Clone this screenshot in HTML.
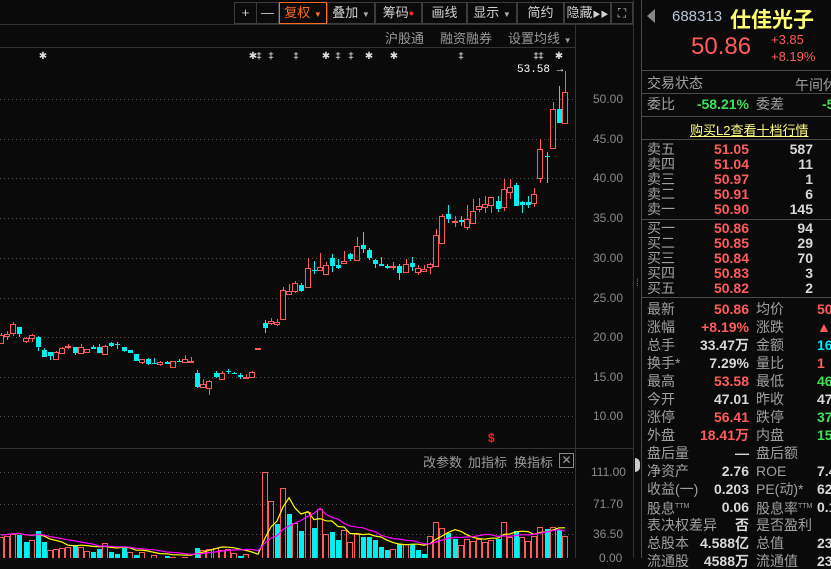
<!DOCTYPE html>
<html><head><meta charset="utf-8">
<style>
*{margin:0;padding:0;box-sizing:border-box}
body{width:831px;height:558px;background:#0a0a0a;overflow:hidden;position:relative;font-family:"Liberation Sans","Noto Sans CJK SC",sans-serif;color:#ccc}
.a{position:absolute;white-space:nowrap}
.btn{position:absolute;top:2px;height:22px;border:1px solid #3c3c3c;color:#d0d0d0;font-size:13px;line-height:20px;text-align:center}
.g{color:#9a9a9a}
.lbl{position:absolute;left:647px;font-size:14px;color:#a0a0a0;line-height:16px}
.l2{position:absolute;left:756px;font-size:14px;color:#a0a0a0;line-height:16px}
.v{position:absolute;font-size:14px;font-weight:bold;line-height:16px;text-align:right}
.r{color:#ff5b5b}.w{color:#d8d8d8}.gr{color:#3ee05a}.cy{color:#00e8f8}
.ax{position:absolute;left:593px;font-size:12px;color:#8a8a8a;line-height:12px}
.hl{position:absolute;left:642px;width:189px;height:1px;background:#4a4a4a}
</style></head><body>
<svg id="c" class="a" style="left:0;top:0" width="831" height="558"></svg>

<!-- toolbar -->
<div class="btn" style="left:234px;width:23px">+</div>
<div class="btn" style="left:256px;width:23px">—</div>
<div class="btn" style="left:279px;width:48px;border-color:#ff6a1a;color:#ff6a1a">复权 <span style="font-size:8px">▼</span></div>
<div class="btn" style="left:327px;width:48px">叠加 <span style="font-size:8px;color:#aaa">▼</span></div>
<div class="btn" style="left:375px;width:47px">筹码<span style="color:#ff2a2a;font-size:9px;vertical-align:top">●</span></div>
<div class="btn" style="left:422px;width:45px">画线</div>
<div class="btn" style="left:467px;width:50px">显示 <span style="font-size:8px;color:#aaa">▼</span></div>
<div class="btn" style="left:517px;width:47px">简约</div>
<div class="btn" style="left:564px;width:47px">隐藏<span style="font-size:8px">▶▶</span></div>
<div class="btn" style="left:611px;width:22px;font-size:12px">⛶</div>

<div class="a g" style="left:385px;top:28px;font-size:13px">沪股通</div>
<div class="a g" style="left:440px;top:28px;font-size:13px">融资融券</div>
<div class="a g" style="left:508px;top:28px;font-size:13px">设置均线 <span style="font-size:8px">▼</span></div>

<div class="a" style="left:517px;top:64px;font-size:11px;color:#fff;font-family:'Liberation Mono',monospace">53.58 →</div>
<div class="a" style="left:488px;top:431px;font-size:12px;color:#ff2020;font-weight:bold">$</div>

<div class="ax" style="top:93px">50.00</div>
<div class="ax" style="top:133px">45.00</div>
<div class="ax" style="top:172px">40.00</div>
<div class="ax" style="top:212px">35.00</div>
<div class="ax" style="top:252px">30.00</div>
<div class="ax" style="top:292px">25.00</div>
<div class="ax" style="top:331px">20.00</div>
<div class="ax" style="top:371px">15.00</div>
<div class="ax" style="top:410px">10.00</div>
<div class="ax" style="top:466px;left:591px">111.00</div>
<div class="ax" style="top:498px">71.70</div>
<div class="ax" style="top:528px">36.50</div>
<div class="ax" style="top:552px;left:599px">0.00</div>

<div class="a g" style="left:423px;top:452px;font-size:13px">改参数</div>
<div class="a g" style="left:468px;top:452px;font-size:13px">加指标</div>
<div class="a g" style="left:514px;top:452px;font-size:13px">换指标</div>
<div class="a g" style="left:559px;top:453px;width:15px;height:15px;border:1px solid #888;font-size:12px;line-height:13px;text-align:center">✕</div>

<!-- right panel -->
<div class="a" style="left:647px;top:9px;width:0;height:0;border-top:7px solid transparent;border-bottom:7px solid transparent;border-right:8px solid #888"></div>
<div class="a" style="left:672px;top:8px;font-size:15px;color:#b8c4d8">688313</div>
<div class="a" style="left:730px;top:4px;font-size:21px;color:#ffff70;font-weight:bold">仕佳光子</div>
<div class="a r" style="left:691px;top:33px;font-size:24px">50.86</div>
<div class="a r" style="left:771px;top:32px;font-size:13px">+3.85</div>
<div class="a r" style="left:771px;top:49px;font-size:13px">+8.19%</div>
<div class="hl" style="top:70px"></div>
<div class="lbl" style="top:75px">交易状态</div>
<div class="a" style="left:795px;top:75px;font-size:14px;color:#a0a0a0">午间休</div>
<div class="hl" style="top:93px"></div>
<div class="lbl" style="top:96px">委比</div>
<div class="v gr" style="left:690px;top:96px;width:59px">-58.21%</div>
<div class="l2" style="top:96px">委差</div>
<div class="v gr" style="left:822px;top:96px">-5</div>
<div class="hl" style="top:116px"></div>
<div class="a" style="left:690px;top:120px;font-size:13px;color:#ffff80;text-decoration:underline">购买L2查看十档行情</div>
<div class="hl" style="top:139px"></div>
<div id="rows"></div>
<div class="hl" style="top:219px"></div>
<div class="hl" style="top:297px"></div>
<div class="a" style="left:636px;top:278px;font-size:10px;color:#777">⁞</div>
<div class="a" style="left:635px;top:458px;width:5px;height:14px;background:#ccc;border-radius:0 6px 6px 0"></div>

<script>
var s='';
function L(x1,y1,x2,y2,c,d){s+='<line x1="'+x1+'" y1="'+y1+'" x2="'+x2+'" y2="'+y2+'" stroke="'+c+'" stroke-width="1"'+(d?' stroke-dasharray="1,3"':'')+'/>';}
// frame lines
L(0,24.5,633,24.5,'#333');L(0,47.5,576,47.5,'#333');
L(575.5,24,575.5,558,'#333');L(633.5,0,633.5,558,'#333');L(641.5,0,641.5,558,'#4a4a4a');
L(0,448.5,633,448.5,'#333');
[99,139,178,218,258,298,337,377,416].forEach(function(y){L(0,y+.5,575,y+.5,'#555',1);});
[472,504,534].forEach(function(y){L(0,y+.5,575,y+.5,'#555',1);});
var R='#ff5b5b',C='#00f0f0';
var d=[[335,343,333,344,'r'],[334,336,331,340,'r'],[324,333,322,336,'r'],[327,334,327,337,'c'],[338,341,337,343,'r'],[335,338,334,342,'r'],[337,347,336,351,'c'],[350,357,348,357,'c'],[352,356,352,360,'c'],[352,359,351,359,'r'],[348,353,347,353,'r'],[346,347,344,349,'r'],[347,353,347,355,'c'],[347,353,344,353,'r'],[349,352,349,352,'r'],[347,349,345,349,'c'],[347,353,344,353,'c'],[346,354,345,354,'r'],[343,346,342,347,'c'],[344,345,342,349,'c'],[347,351,347,352,'c'],[350,353,350,353,'c'],[354,361,354,361,'c'],[359,362,359,364,'r'],[359,364,358,365,'c'],[363,364,358,364,'c'],[362,364,361,366,'r'],[362,364,361,364,'c'],[361,367,361,367,'r'],[361,362,359,362,'c'],[359,362,355,362,'r'],[361,362,357,362,'r'],[373,387,370,388,'c'],[384,387,379,387,'r'],[381,388,380,395,'r'],[373,377,371,378,'c'],[373,379,371,379,'r'],[371,372,369,374,'c'],[373,374,372,374,'c'],[375,377,373,379,'c'],[377,378,374,378,'r'],[372,377,371,377,'r'],[348,349,348,349,'r'],[323,328,320,333,'c'],[321,323,318,325,'r'],[322,324,319,326,'r'],[290,319,287,319,'r'],[291,294,284,295,'r'],[283,291,281,293,'r'],[285,291,283,292,'c'],[268,287,258,287,'r'],[270,271,261,274,'c'],[267,270,253,270,'r'],[265,274,262,274,'r'],[258,266,254,272,'c'],[265,268,259,269,'c'],[261,263,251,264,'r'],[254,259,253,261,'c'],[246,260,237,260,'r'],[245,249,232,253,'c'],[250,258,248,260,'c'],[260,264,259,268,'c'],[264,266,257,266,'c'],[266,268,264,269,'c'],[266,267,262,270,'r'],[266,273,264,280,'c'],[264,272,259,273,'r'],[263,267,257,271,'c'],[268,272,265,275,'r'],[269,271,265,271,'r'],[264,267,263,274,'r'],[235,266,229,267,'r'],[216,243,214,243,'r'],[214,219,205,223,'c'],[221,222,216,227,'r'],[220,222,216,226,'c'],[219,227,205,230,'r'],[211,223,199,223,'r'],[206,209,198,212,'r'],[204,207,196,213,'r'],[197,205,197,213,'r'],[201,209,196,212,'c'],[189,207,179,211,'r'],[187,192,179,199,'r'],[185,206,183,206,'c'],[202,205,201,213,'c'],[202,205,196,208,'c'],[194,203,188,207,'r'],[149,178,139,183,'r'],[156,157,152,183,'c'],[109,148,102,148,'r'],[109,123,86,123,'c'],[92,123,71,123,'r']];
d.forEach(function(k,i){var x=Math.round(1+6.13*i),col=k[4]=='r'?R:C;
 L(x+.5,k[2],x+.5,k[3],col);
 var h=Math.max(1,k[1]-k[0]);
 if(k[4]=='r')s+='<rect x="'+(x-2.5)+'" y="'+(k[0]+.5)+'" width="5" height="'+h+'" fill="#0a0a0a" stroke="'+R+'"/>';
 else s+='<rect x="'+(x-2)+'" y="'+k[0]+'" width="5" height="'+h+'" fill="'+C+'"/>';
});
var v=[[537,'r'],[536,'r'],[534,'r'],[535,'c'],[542,'c'],[540,'r'],[531,'c'],[542,'c'],[550,'r'],[549,'r'],[548,'r'],[547,'r'],[545,'c'],[547,'r'],[551,'r'],[552,'c'],[549,'c'],[543,'r'],[552,'c'],[554,'c'],[548,'c'],[552,'r'],[555,'c'],[552,'r'],[558,'c'],[555,'r'],[558,'r'],[556,'c'],[557,'r'],[558,'c'],[557,'r'],[558,'r'],[548,'c'],[550,'r'],[549,'r'],[548,'r'],[550,'r'],[549,'r'],[553,'r'],[556,'c'],[554,'r'],[558,'r'],[560,'r'],[472,'r'],[501,'r'],[524,'c'],[488,'r'],[514,'c'],[523,'r'],[531,'c'],[512,'r'],[528,'c'],[509,'r'],[534,'r'],[532,'c'],[540,'c'],[530,'r'],[542,'r'],[534,'r'],[537,'c'],[537,'c'],[540,'c'],[547,'c'],[550,'c'],[549,'r'],[544,'c'],[544,'r'],[544,'c'],[550,'c'],[554,'c'],[536,'r'],[522,'r'],[528,'r'],[533,'c'],[539,'c'],[545,'r'],[539,'r'],[541,'r'],[539,'r'],[542,'r'],[540,'r'],[539,'c'],[522,'r'],[537,'r'],[531,'c'],[537,'r'],[541,'r'],[536,'r'],[527,'r'],[529,'c'],[527,'r'],[530,'c'],[536,'r']];
v.forEach(function(k,i){var x=Math.round(1+6.13*i);
 if(k[1]=='r')s+='<rect x="'+(x-2.5)+'" y="'+(k[0]+.5)+'" width="5" height="'+(562-k[0])+'" fill="none" stroke="'+R+'"/>';
 else s+='<rect x="'+(x-2)+'" y="'+k[0]+'" width="5" height="'+(562-k[0])+'" fill="'+C+'"/>';
});
function ma(n,col){var p=[];for(var i=0;i<v.length;i++){var t=0,c=0;for(var j=Math.max(0,i-n+1);j<=i;j++){t+=562-v[j][0];c++;}p.push(Math.round(1+6.13*i)+','+(562-t/c-2).toFixed(1));}
 s+='<polyline points="'+p.join(' ')+'" fill="none" stroke="'+col+'" stroke-width="1.2"/>';}
ma(5,'#ffff00');ma(10,'#ff00ff');
// stars
[43,253,259,271,296,326,338,351,369,394,461,536,541,559].forEach(function(x,i){
 var ch=[43,253,326,369,394,559].indexOf(x)>=0?'✱':'‡';
 s+='<text x="'+x+'" y="59" fill="#ddd" font-size="10" text-anchor="middle" font-family="DejaVu Sans">'+ch+'</text>';});
document.getElementById('c').innerHTML=s;

// order book + stats
var h='';
var sell=[['卖五','51.05','587'],['卖四','51.04','11'],['卖三','50.97','1'],['卖二','50.91','6'],['卖一','50.90','145']];
var buy=[['买一','50.86','94'],['买二','50.85','29'],['买三','50.84','70'],['买四','50.83','3'],['买五','50.82','2']];
function row(y,a){h+='<div class="lbl" style="top:'+y+'px">'+a[0]+'</div><div class="v r" style="left:690px;top:'+y+'px;width:59px">'+a[1]+'</div><div class="v w" style="left:760px;top:'+y+'px;width:53px">'+a[2]+'</div>';}
sell.forEach(function(a,i){row(141+i*15,a);});
buy.forEach(function(a,i){row(220+i*15,a);});
var st=[['最新','50.86','r','均价','50','r'],['涨幅','+8.19%','r','涨跌','▲3','r'],['总手','33.47万','w','金额','16.7','cy'],['换手*','7.29%','w','量比','1','r'],['最高','53.58','r','最低','46','gr'],['今开','47.01','w','昨收','47','w'],['涨停','56.41','r','跌停','37','gr'],['外盘','18.41万','r','内盘','15.00','gr'],['盘后量','—','w','盘后额','',''],['净资产','2.76','w','ROE','7.4','w'],['收益(一)','0.203','w','PE(动)*','62','w'],['股息<sup style="font-size:7px">TTM</sup>','0.06','w','股息率<sup style="font-size:7px">TTM</sup>','0.1','w'],['表决权差异','否','w','是否盈利','',''],['总股本','4.588亿','w','总值','233.','w'],['流通股','4588万','w','流通值','23.3','w']];
st.forEach(function(a,i){var y=301+i*18;
 h+='<div class="lbl" style="top:'+y+'px">'+a[0]+'</div><div class="v '+a[2]+'" style="left:680px;top:'+y+'px;width:69px">'+a[1]+'</div><div class="l2" style="top:'+y+'px">'+a[3]+'</div><div class="v '+a[5]+'" style="left:817px;top:'+y+'px;text-align:left">'+a[4]+'</div>';});
document.getElementById('rows').innerHTML=h;
</script>
</body></html>
